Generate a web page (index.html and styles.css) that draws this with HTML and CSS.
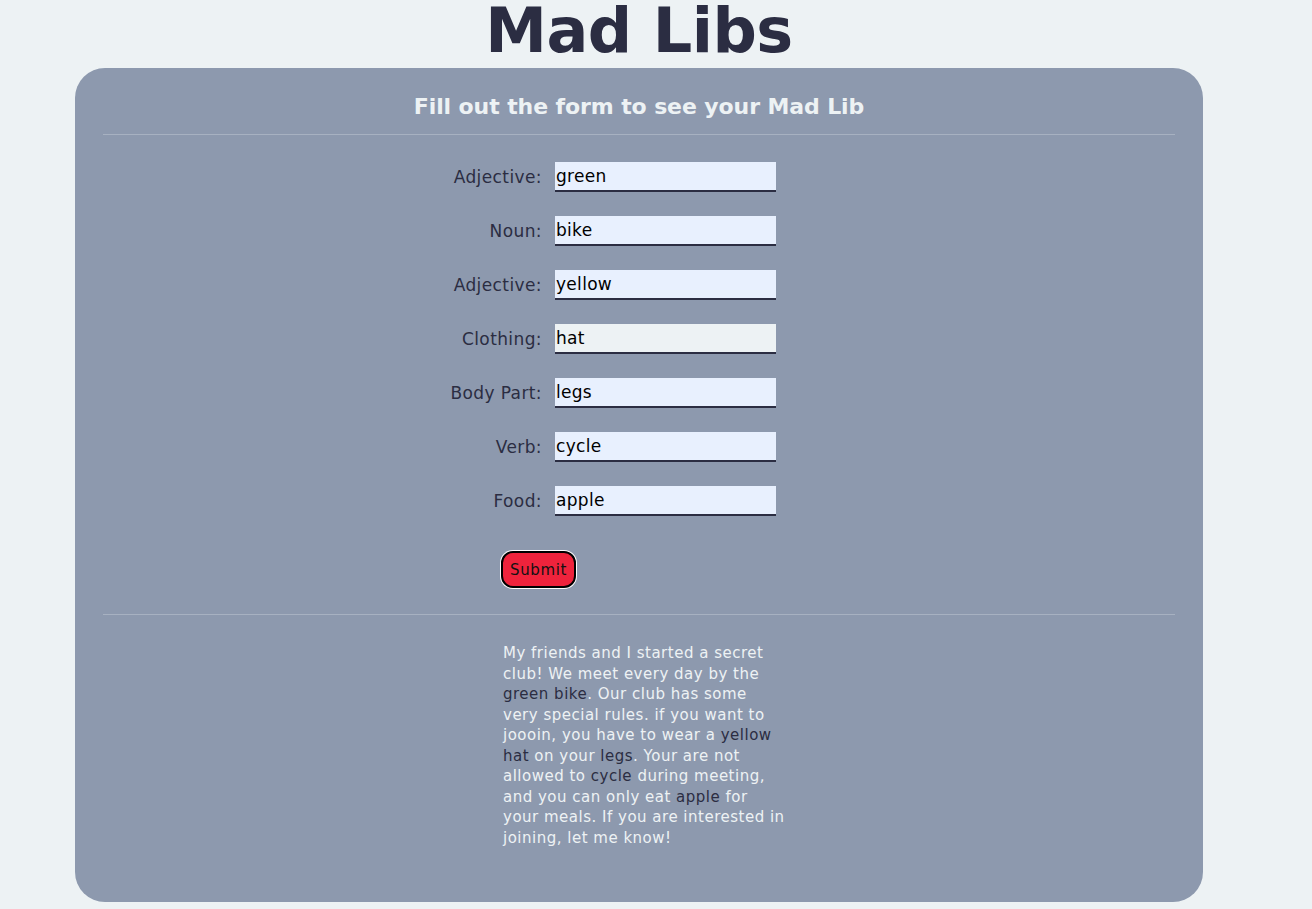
FILE: index.html
```html
<!DOCTYPE html>
<html lang="en">
<head>
<meta charset="utf-8">
<title>Mad Libs</title>
<link rel="stylesheet" href="styles.css">
</head>
<body>
<h1 class="title">Mad Libs</h1>
<main class="card">
  <h2 class="subtitle">Fill out the form to see your Mad Lib</h2>
  <hr class="rule">
  <form class="form">
    <div class="row"><label class="lbl">Adjective:</label><input class="field" value="green"></div>
    <div class="row"><label class="lbl">Noun:</label><input class="field" value="bike"></div>
    <div class="row"><label class="lbl">Adjective:</label><input class="field" value="yellow"></div>
    <div class="row"><label class="lbl">Clothing:</label><input class="field field-plain" value="hat"></div>
    <div class="row"><label class="lbl">Body Part:</label><input class="field" value="legs"></div>
    <div class="row"><label class="lbl">Verb:</label><input class="field" value="cycle"></div>
    <div class="row"><label class="lbl">Food:</label><input class="field" value="apple"></div>
    <div class="actions"><button type="button" class="submit">Submit</button></div>
  </form>
  <hr class="rule rule-2">
  <p class="story">My friends and I started a secret club! We meet every day by the <span class="w">green</span> <span class="w">bike</span>. Our club has some very special rules. if you want to joooin, you have to wear a <span class="w">yellow</span> <span class="w">hat</span> on your <span class="w">legs</span>. Your are not allowed to <span class="w">cycle</span> during meeting, and you can only eat <span class="w">apple</span> for your meals. If you are interested in joining, let me know!</p>
</main>
</body>
</html>
```
FILE: styles.css
```css
body {
  margin: 0;
  background: #edf2f4;
  font-family: "DejaVu Sans", "Liberation Sans", sans-serif;
  color: #2b2d42;
}
.title {
  margin: 0;
  height: 68px;
  line-height: 62px;
  font-size: 62px;
  font-weight: bold;
  text-align: center;
  letter-spacing: -0.5px;
  padding-right: 34px;
  color: #2b2d42;
}
.card {
  margin-left: 75px;
  width: 1128px;
  height: 834px;
  box-sizing: border-box;
  padding: 24px 28px 0;
  background: #8d99ae;
  border-radius: 30px;
}
.subtitle {
  margin: 0;
  height: 30px;
  line-height: 30px;
  font-size: 22px;
  font-weight: bold;
  text-align: center;
  color: #edf2f4;
  letter-spacing: -0.1px;
}
.rule {
  margin: 12px 0 0;
  border: 0;
  height: 1px;
  background: #a7b1c1;
}
.rule-2 {
  margin-top: 26px;
}
.form {
  margin-top: 27px;
  display: flex;
  flex-direction: column;
  gap: 24px;
}
.row {
  display: grid;
  grid-template-columns: 439px 221px;
  column-gap: 13px;
  align-items: center;
}
.lbl {
  text-align: right;
  font-size: 17px;
  letter-spacing: 0.4px;
  color: #2b2d42;
}
.field {
  width: 221px;
  height: 30px;
  box-sizing: border-box;
  border: 0;
  border-bottom: 2px solid #2b2d42;
  background: #e8f0fe;
  padding: 0 1px;
  font-family: "DejaVu Sans", "Liberation Sans", sans-serif;
  font-size: 17px;
  letter-spacing: 0.3px;
  color: #000;
  outline: none;
}
.field-plain {
  background: #edf2f4;
}
.actions {
  margin-top: 11px;
  padding-left: 398px;
}
.submit {
  width: 75px;
  height: 37px;
  background: #ef233c;
  border: 2px solid #000;
  box-shadow: 0 0 0 1px #fff;
  border-radius: 12px;
  font-family: "DejaVu Sans", "Liberation Sans", sans-serif;
  font-size: 15px;
  letter-spacing: 0.6px;
  color: #111;
  padding: 0;
}
.story {
  margin: 28px 0 0 400px;
  width: 282.5px;
  font-size: 15px;
  letter-spacing: 0.5px;
  line-height: 20.5px;
  color: #edf2f4;
}
.w {
  color: #2b2d42;
}
```
